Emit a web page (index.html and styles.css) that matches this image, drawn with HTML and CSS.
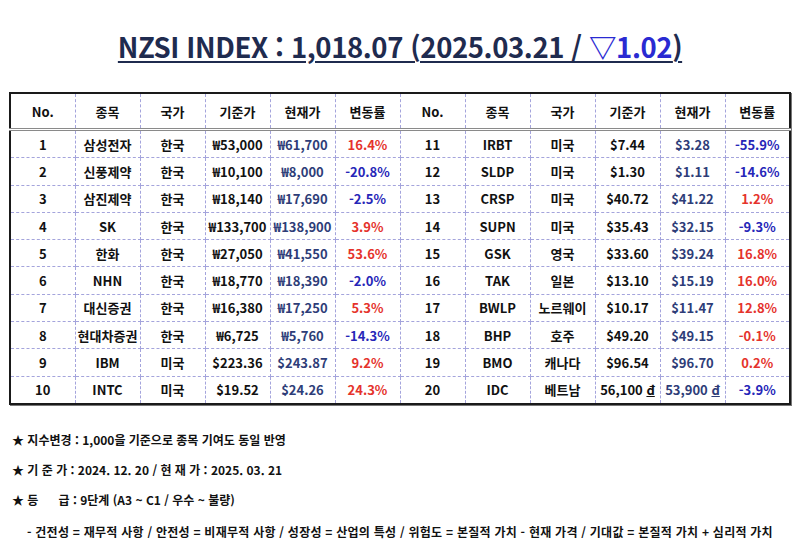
FILE: index.html
```html
<!DOCTYPE html>
<html lang="ko">
<head>
<meta charset="utf-8">
<link rel="stylesheet" href="styles.css">
</head>
<body>
<h1 class="title">NZSI INDEX : 1,018.07 (2025.03.21 / <span class="down">▽1.02</span>)</h1>
<table class="idx">
<thead>
<tr><th>No.</th><th>종목</th><th>국가</th><th>기준가</th><th>현재가</th><th>변동률</th><th>No.</th><th>종목</th><th>국가</th><th>기준가</th><th>현재가</th><th>변동률</th></tr>
</thead>
<tbody>
<tr><td>1</td><td>삼성전자</td><td>한국</td><td>₩53,000</td><td class="cur">₩61,700</td><td class="up">16.4%</td><td>11</td><td>IRBT</td><td>미국</td><td>$7.44</td><td class="cur">$3.28</td><td class="dn">-55.9%</td></tr>
<tr><td>2</td><td>신풍제약</td><td>한국</td><td>₩10,100</td><td class="cur">₩8,000</td><td class="dn">-20.8%</td><td>12</td><td>SLDP</td><td>미국</td><td>$1.30</td><td class="cur">$1.11</td><td class="dn">-14.6%</td></tr>
<tr><td>3</td><td>삼진제약</td><td>한국</td><td>₩18,140</td><td class="cur">₩17,690</td><td class="dn">-2.5%</td><td>13</td><td>CRSP</td><td>미국</td><td>$40.72</td><td class="cur">$41.22</td><td class="up">1.2%</td></tr>
<tr><td>4</td><td>SK</td><td>한국</td><td>₩133,700</td><td class="cur">₩138,900</td><td class="up">3.9%</td><td>14</td><td>SUPN</td><td>미국</td><td>$35.43</td><td class="cur">$32.15</td><td class="dn">-9.3%</td></tr>
<tr><td>5</td><td>한화</td><td>한국</td><td>₩27,050</td><td class="cur">₩41,550</td><td class="up">53.6%</td><td>15</td><td>GSK</td><td>영국</td><td>$33.60</td><td class="cur">$39.24</td><td class="up">16.8%</td></tr>
<tr><td>6</td><td>NHN</td><td>한국</td><td>₩18,770</td><td class="cur">₩18,390</td><td class="dn">-2.0%</td><td>16</td><td>TAK</td><td>일본</td><td>$13.10</td><td class="cur">$15.19</td><td class="up">16.0%</td></tr>
<tr><td>7</td><td>대신증권</td><td>한국</td><td>₩16,380</td><td class="cur">₩17,250</td><td class="up">5.3%</td><td>17</td><td>BWLP</td><td>노르웨이</td><td>$10.17</td><td class="cur">$11.47</td><td class="up">12.8%</td></tr>
<tr><td>8</td><td>현대차증권</td><td>한국</td><td>₩6,725</td><td class="cur">₩5,760</td><td class="dn">-14.3%</td><td>18</td><td>BHP</td><td>호주</td><td>$49.20</td><td class="cur">$49.15</td><td class="up">-0.1%</td></tr>
<tr><td>9</td><td>IBM</td><td>미국</td><td>$223.36</td><td class="cur">$243.87</td><td class="up">9.2%</td><td>19</td><td>BMO</td><td>캐나다</td><td>$96.54</td><td class="cur">$96.70</td><td class="up">0.2%</td></tr>
<tr><td>10</td><td>INTC</td><td>미국</td><td>$19.52</td><td class="cur">$24.26</td><td class="up">24.3%</td><td>20</td><td>IDC</td><td>베트남</td><td>56,100 <u>đ</u></td><td class="cur">53,900 <u>đ</u></td><td class="dn">-3.9%</td></tr>
</tbody>
</table>
<div class="notes">
<p>★ 지수변경 : 1,000을 기준으로 종목 기여도 동일 반영</p>
<p>★ 기 준 가 : 2024. 12. 20 / 현 재 가 : 2025. 03. 21</p>
<p>★ 등&nbsp;&nbsp;&nbsp;&nbsp;&nbsp;&nbsp;급 : 9단계 (A3 ~ C1 / 우수 ~ 불량)</p>
<p class="sub">- 건전성 = 재무적 사항 / 안전성 = 비재무적 사항 / 성장성 = 산업의 특성 / 위험도 = 본질적 가치 - 현재 가격 / 기대값 = 본질적 가치 + 심리적 가치</p>
</div>
</body>
</html>
```
FILE: styles.css
```css
html, body {
  margin: 0;
  padding: 0;
  background: #ffffff;
}
body {
  font-family: "Noto Sans CJK KR", "Noto Sans", sans-serif;
  color: #111111;
  padding: 0 9px;
}
.title {
  margin: 0;
  padding-top: 29px;
  height: 92px;
  box-sizing: border-box;
  text-align: center;
  font-size: 27.5px;
  line-height: 34px;
  font-weight: 700;
  color: #1f2b4f;
  text-decoration: underline;
  text-decoration-thickness: 2px;
  text-underline-offset: 3px;
  letter-spacing: -0.4px;
}
.title .down {
  color: #2a2ad2;
}
.idx {
  width: 782px;
  border-collapse: collapse;
  table-layout: fixed;
  border: 2px solid #1a1a1a;
  box-shadow: 1px 1px 0 #777777;
  font-size: 13px;
  font-weight: 700;
}
.idx th, .idx td {
  text-align: center;
  padding: 0;
  border-right: 1px dashed #a4a4dc;
  border-bottom: 1px dashed #a4a4dc;
  white-space: nowrap;
}
.idx th {
  height: 34px;
  font-weight: 700;
  border-bottom: 3px double #8a8a8a;
}
.idx td {
  height: 26.3px;
}
.idx th:last-child, .idx td:last-child {
  border-right: none;
}
.idx tr:last-child td {
  border-bottom: none;
}
.idx .cur {
  color: #2e3d78;
}
.idx .up {
  color: #e5332c;
}
.idx .dn {
  color: #2626b8;
}
.notes {
  padding-top: 20px;
  font-size: 12px;
  font-weight: 700;
}
.notes p {
  margin: 0;
  padding-left: 3px;
  line-height: 30px;
  white-space: nowrap;
}
.notes .sub {
  padding-left: 18px;
  line-height: 34px;
  letter-spacing: 0.25px;
}
```
